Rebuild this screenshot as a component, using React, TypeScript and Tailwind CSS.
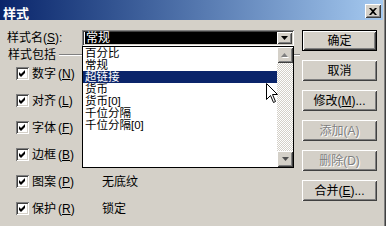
import React from "react";

const raised =
  "shadow-[inset_1px_1px_#ffffff,inset_-1px_-1px_#404040,inset_2px_2px_#d4d0c8,inset_-2px_-2px_#808080]";
const sunken =
  "shadow-[inset_1px_1px_#808080,inset_-1px_-1px_#ffffff,inset_2px_2px_#404040,inset_-2px_-2px_#d4d0c8]";

function U({ c }: { c: string }) {
  return <span className="underline underline-offset-[1px]">{c}</span>;
}

function CheckBox() {
  return (
    <div className={`w-[13px] h-[13px] bg-white shrink-0 ${sunken} flex items-center justify-center`}>
      <svg width="13" height="13" viewBox="0 0 13 13">
        <path d="M3 5 L5 7 L9 3 L9 6 L5 10 L3 8 Z" fill="#000" />
      </svg>
    </div>
  );
}

function Btn({
  children,
  def,
  disabled,
}: {
  children: React.ReactNode;
  def?: boolean;
  disabled?: boolean;
}) {
  return (
    <div
      className={`w-[75px] h-[21px] flex items-center justify-center bg-[#d4d0c8] ${
        def ? "border border-black" : ""
      }`}
    >
      <div
        className={`w-full h-full flex items-center justify-center ${raised} ${
          disabled ? "text-[#808080] [text-shadow:1px_1px_#ffffff]" : "text-black"
        }`}
      >
        {children}
      </div>
    </div>
  );
}

const rows: { label: string; key: string; val?: string }[] = [
  { label: "数字", key: "N" },
  { label: "对齐", key: "L" },
  { label: "字体", key: "F" },
  { label: "边框", key: "B" },
  { label: "图案", key: "P", val: "无底纹" },
  { label: "保护", key: "R", val: "锁定" },
];

const items = ["百分比", "常规", "超链接", "货币", "货币[0]", "千位分隔", "千位分隔[0]"];

export default function App() {
  return (
    <div className="w-[386px] h-[226px] bg-[#d4d0c8] relative overflow-hidden font-['Liberation_Sans','Noto_Sans_CJK_SC',sans-serif] text-[12px] leading-[12px] text-black shadow-[inset_-1px_0_#404040,inset_-2px_0_#808080]">
      {/* title bar */}
      <div className="h-[20px] mr-[3px] bg-gradient-to-r from-[#0a246a] to-[#a6caf0] flex items-center justify-between pl-[3px] pr-[2px]">
        <span className="text-white font-bold text-[13px] leading-[13px] pt-[4px] font-['Noto_Sans_CJK_SC',sans-serif]">
          样式
        </span>
        <div className={`w-[16px] h-[14px] bg-[#d4d0c8] ${raised} flex items-center justify-center mt-[2px]`}>
          <svg width="8" height="7" viewBox="0 0 8 7">
            <path d="M0 0 H2 L4 2 L6 0 H8 L5 3.5 L8 7 H6 L4 5 L2 7 H0 L3 3.5 Z" fill="#000" />
          </svg>
        </div>
      </div>

      <div className="flex">
        {/* left */}
        <div className="w-[302px] relative">
          <div className="flex items-center pt-[10px]">
            <div className="w-[82px] pl-[7px]">
              样式名(<U c="S" />):
            </div>
            <div className={`w-[212px] h-[16px] bg-white ${sunken} flex items-center pl-[3px] pr-[2px]`}>
              <div className="flex-1 h-[12px] bg-black text-white pl-[1px] flex items-center">常规</div>
              <div className={`w-[15px] h-[12px] bg-[#d4d0c8] ${raised} flex items-center justify-center`}>
                <svg width="7" height="4" viewBox="0 0 7 4">
                  <path d="M0 0 H7 L3.5 4 Z" fill="#000" />
                </svg>
              </div>
            </div>
          </div>
          <div className="h-[14px] pt-[3px] pl-[8px] flex items-center">
            <span className="shrink-0">样式包括</span>
            <div className="flex-1 ml-[3px] mr-[2px] h-[2px] border-t border-[#808080] border-b border-b-white" />
          </div>
          <div className="flex flex-col">
            {rows.map((r) => (
              <div key={r.label} className="h-[27px] flex items-center pl-[16px]">
                <CheckBox />
                <div className={`pl-[3px] shrink-0 ${r.val ? "w-[73px]" : ""}`}>
                  {r.label}
                  <span className="ml-[2px]">
                    (<U c={r.key} />)
                  </span>
                </div>
                {r.val && <span>{r.val}</span>}
              </div>
            ))}
          </div>

          {/* dropdown list (popup) */}
          <div className="absolute left-[82px] top-[26px] w-[212px] h-[122px] bg-white border border-black flex">
            <div className="flex-1 flex flex-col text-[11.5px]">
              {items.map((it) => (
                <div
                  key={it}
                  className={`h-[12px] leading-[12px] pl-[2px] overflow-hidden ${
                    it === "超链接" ? "bg-[#0a246a] text-white" : ""
                  }`}
                >
                  {it}
                </div>
              ))}
            </div>
            <div className="w-[16px] flex flex-col bg-[repeating-conic-gradient(#d4d0c8_0_25%,#ffffff_0_50%)] bg-[length:2px_2px]">
              <div className={`h-[16px] bg-[#d4d0c8] ${raised} flex items-center justify-center`}>
                <svg width="8" height="5" viewBox="0 0 8 5">
                  <path d="M1 5 H8 L4.5 1 Z" fill="#ffffff" />
                  <path d="M0 4 H7 L3.5 0 Z" fill="#808080" />
                </svg>
              </div>
              <div className="flex-1" />
              <div className={`h-[16px] bg-[#d4d0c8] ${raised} flex items-center justify-center`}>
                <svg width="7" height="4" viewBox="0 0 7 4">
                  <path d="M0 0 H7 L3.5 4 Z" fill="#505050" />
                </svg>
              </div>
            </div>
          </div>

          {/* mouse cursor */}
          <svg
            className="absolute left-[266px] top-[63px]"
            width="13"
            height="21"
            viewBox="0 0 13 21"
          >
            <path
              d="M0.5 0.5 L0.5 16.5 L4.5 12.5 L7.5 19.5 L9.5 18.5 L6.5 11.5 L11.5 11.5 Z"
              fill="#ffffff"
              stroke="#000"
              strokeWidth="1"
            />
          </svg>
        </div>

        {/* right buttons */}
        <div className="flex flex-col gap-[9px] pt-[10px]">
          <Btn def>确定</Btn>
          <Btn>取消</Btn>
          <Btn>
            修改(<U c="M" />)...
          </Btn>
          <Btn disabled>添加(A)</Btn>
          <Btn disabled>删除(D)</Btn>
          <Btn>
            合并(<U c="E" />)...
          </Btn>
        </div>
      </div>
    </div>
  );
}
